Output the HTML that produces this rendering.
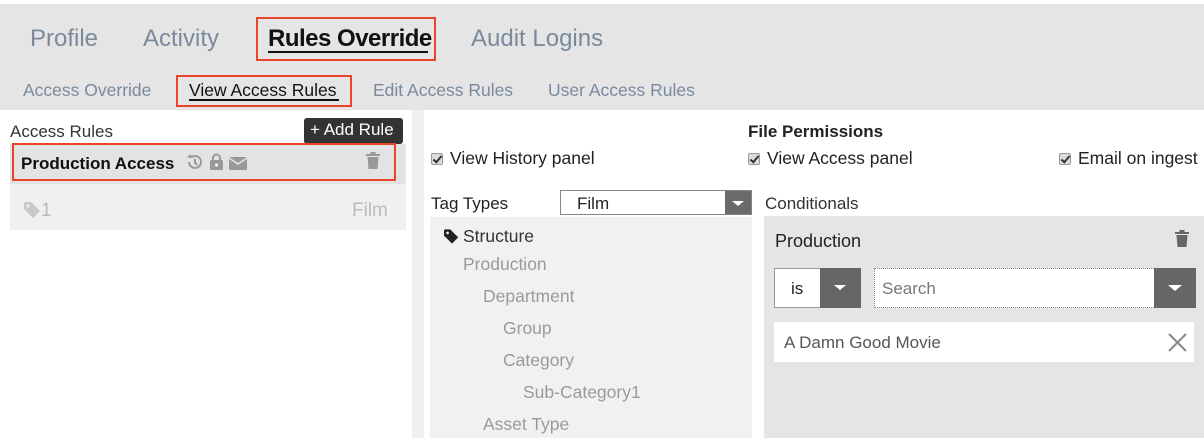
<!DOCTYPE html>
<html><head><style>
*{margin:0;padding:0;box-sizing:border-box}
body{width:1204px;height:438px;overflow:hidden;background:#fff;font-family:"Liberation Sans",sans-serif;position:relative;color:#222}
.a{position:absolute;white-space:nowrap}
.tab{font-size:24px;color:#7a8a9c;top:25px}
.sub{font-size:17.5px;color:#7a8a9c;top:80px}
.red{position:absolute;border:2px solid #e8452c}
.t{font-size:17px}
.g{color:#9a9a9a}
.cb{display:inline-block;width:12px;height:12px;border:1px solid #999;border-radius:2px;background:#ddd;vertical-align:-1px;margin-right:7px;position:relative}
.cb:after{content:"";position:absolute;left:3px;top:0px;width:3px;height:7px;border:solid #333;border-width:0 2px 2px 0;transform:rotate(40deg)}
</style></head><body>
<div class="a" style="left:0;top:4px;width:1204px;height:106px;background:#e5e5e5"></div>
<div class="a tab" style="left:30px">Profile</div>
<div class="a tab" style="left:143px">Activity</div>
<div class="a tab" style="left:268px;color:#111;font-weight:bold;letter-spacing:-0.5px">Rules Override</div>
<div class="a" style="left:268px;top:51px;width:160px;height:2px;background:#111"></div>
<div class="red" style="left:256px;top:17px;width:180px;height:44px"></div>
<div class="a tab" style="left:471px">Audit Logins</div>
<div class="a sub" style="left:23px">Access Override</div>
<div class="a sub" style="left:189px;color:#111">View Access Rules</div>
<div class="a" style="left:189px;top:99px;width:150px;height:2px;background:#111"></div>
<div class="red" style="left:176px;top:75px;width:176px;height:32px"></div>
<div class="a sub" style="left:373px">Edit Access Rules</div>
<div class="a sub" style="left:548px">User Access Rules</div>

<div class="a" style="left:412px;top:110px;width:12px;height:328px;background:#f0f0f0"></div>

<div class="a t" style="left:10px;top:122px;color:#333">Access Rules</div>
<div class="a" style="left:304px;top:118px;width:99px;height:26px;background:#333;border-radius:3px;color:#fff;font-size:17px;padding:2px 0 0 6px">+ Add Rule</div>
<div class="a" style="left:10px;top:144px;width:396px;height:40px;background:#e3e3e3"></div>
<div class="red" style="left:12px;top:143px;width:384px;height:38px"></div>
<div class="a t" style="left:21px;top:154px;font-weight:bold;color:#111">Production Access</div>
<svg class="a" style="left:186px;top:153px" width="64" height="18" viewBox="0 0 64 18">
<g fill="none" stroke="#999" stroke-width="2"><path d="M3 9a6 6 0 1 0 2-4.5"/><path d="M9 6v4l2.5 2"/></g><path d="M1 4l4 1 0-4z" fill="#999"/>
<rect x="24" y="7" width="13" height="10" rx="1.5" fill="#999"/><path d="M27 8V5a3.5 3.5 0 0 1 7 0v3" fill="none" stroke="#999" stroke-width="2"/><circle cx="30.5" cy="12" r="1.5" fill="#fff"/>
<rect x="43" y="4" width="18" height="13" rx="1.5" fill="#999"/><path d="M43 5l9 6 9-6" fill="none" stroke="#e3e3e3" stroke-width="1.6"/>
</svg>
<svg class="a" style="left:366px;top:152px" width="14" height="17" viewBox="0 0 14 17"><rect x="0" y="2" width="14" height="2" fill="#999"/><rect x="4.5" y="0" width="5" height="3" fill="#999"/><path d="M1.5 5h11l-1 12h-9z" fill="#999"/></svg>
<div class="a" style="left:10px;top:184px;width:396px;height:46px;background:#f0f0f0"></div>
<svg class="a" style="left:24px;top:202px" width="18" height="16" viewBox="0 0 18 16"><path d="M0 1v6l9 9 7-7-9-9H1z" fill="#c8c8c8"/><circle cx="4" cy="4" r="1.5" fill="#f0f0f0"/></svg>
<div class="a" style="left:41px;top:200px;color:#bbb;font-size:19px">1</div>
<div class="a" style="left:352px;top:200px;color:#bbb;font-size:19px">Film</div>

<div class="a t" style="left:748px;top:122px;font-weight:bold;color:#222">File Permissions</div>
<div class="a t" style="left:431px;top:148px;font-size:17.5px"><span class="cb"></span>View History panel</div>
<div class="a t" style="left:748px;top:148px;font-size:17.5px"><span class="cb"></span>View Access panel</div>
<div class="a t" style="left:1059px;top:148px;font-size:17.5px"><span class="cb"></span>Email on ingest</div>

<div class="a t" style="left:431px;top:194px">Tag Types</div>
<div class="a" style="left:560px;top:190px;width:192px;height:25px;border:1px solid #888;background:#fff"></div>
<div class="a t" style="left:577px;top:194px">Film</div>
<div class="a" style="left:725px;top:191px;width:26px;height:23px;background:#6a6a6a"></div>
<div class="a" style="left:732px;top:201px;width:0;height:0;border-left:6px solid transparent;border-right:6px solid transparent;border-top:5px solid #fff"></div>
<div class="a" style="left:430px;top:217px;width:322px;height:221px;background:#f1f1f1"></div>
<svg class="a" style="left:444px;top:229px" width="16" height="15" viewBox="0 0 18 16"><path d="M0 1v6l9 9 7-7-9-9H1z" fill="#222"/><circle cx="4" cy="4" r="1.5" fill="#f1f1f1"/></svg>
<div class="a t" style="left:463px;top:226px;color:#333;font-size:17.5px">Structure</div>
<div class="a t g" style="left:463px;top:254px;font-size:17.5px">Production</div>
<div class="a t g" style="left:483px;top:286px;font-size:17.5px">Department</div>
<div class="a t g" style="left:503px;top:318px;font-size:17.5px">Group</div>
<div class="a t g" style="left:503px;top:350px;font-size:17.5px">Category</div>
<div class="a t g" style="left:523px;top:382px;font-size:17.5px">Sub-Category1</div>
<div class="a t g" style="left:483px;top:414px;font-size:17.5px">Asset Type</div>

<div class="a t" style="left:765px;top:194px;color:#333">Conditionals</div>
<div class="a" style="left:764px;top:216px;width:440px;height:222px;background:#e5e5e5"></div>
<div class="a" style="left:775px;top:231px;font-size:18px;color:#222">Production</div>
<svg class="a" style="left:1175px;top:230px" width="14" height="17" viewBox="0 0 14 17"><rect x="0" y="2" width="14" height="2" fill="#666"/><rect x="4.5" y="0" width="5" height="3" fill="#666"/><path d="M1.5 5h11l-1 12h-9z" fill="#666"/></svg>
<div class="a" style="left:774px;top:268px;width:87px;height:40px;border:1px solid #999;background:#fff"></div>
<div class="a t" style="left:791px;top:279px">is</div>
<div class="a" style="left:820px;top:268px;width:41px;height:40px;background:#666"></div>
<div class="a" style="left:834px;top:285px;border-left:6px solid transparent;border-right:6px solid transparent;border-top:5px solid #fff"></div>
<div class="a" style="left:874px;top:268px;width:282px;height:40px;border:1px dotted #888;background:#fff"></div>
<div class="a t" style="left:882px;top:279px;color:#777">Search</div>
<div class="a" style="left:1154px;top:268px;width:42px;height:40px;background:#666"></div>
<div class="a" style="left:1168px;top:285px;border-left:7px solid transparent;border-right:7px solid transparent;border-top:6px solid #fff"></div>
<div class="a" style="left:774px;top:322px;width:420px;height:40px;background:#fff"></div>
<div class="a t" style="left:784px;top:333px;color:#555">A Damn Good Movie</div>
<svg class="a" style="left:1168px;top:333px" width="19" height="19" viewBox="0 0 19 19"><path d="M1 1l17 17M18 1L1 18" stroke="#888" stroke-width="2"/></svg>
</body></html>
